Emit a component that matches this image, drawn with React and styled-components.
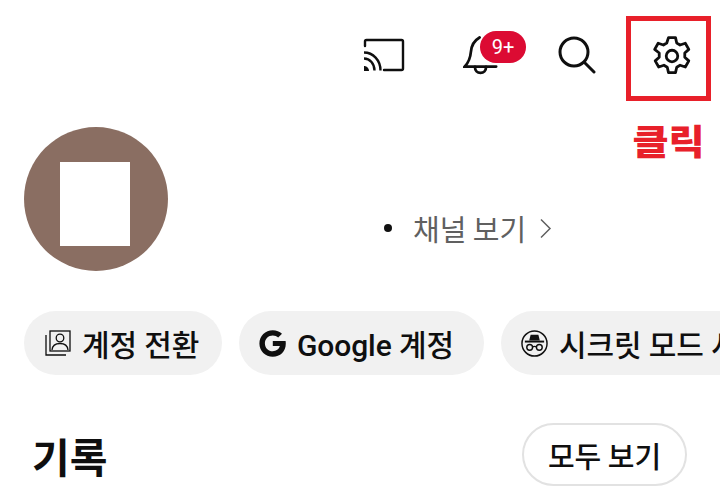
import React from "react";
import styled, { createGlobalStyle } from "styled-components";

const Global = createGlobalStyle`
  html, body { margin: 0; padding: 0; background: #fff; }
  body { font-family: "Roboto", "Noto Sans CJK KR", sans-serif; color: #0f0f0f; }
`;

const Page = styled.div`
  width: 720px;
  height: 491px;
  overflow: hidden;
  display: flex;
  flex-direction: column;
  background: #fff;
`;

const TopBar = styled.header`
  height: 101px;
  flex: none;
  display: flex;
  justify-content: flex-end;
  align-items: flex-start;
  padding: 16px 9px 0 0;
  box-sizing: border-box;
`;

const ToolIcon = styled.div`
  position: relative;
  width: ${(p) => p.$w}px;
  height: 78px;
  display: flex;
  align-items: center;
  justify-content: center;
  flex: none;
`;

const Highlight = styled.div`
  width: 85px;
  height: 85px;
  box-sizing: border-box;
  border: 5px solid #e8202a;
  padding: 0 0 6px 7px;
  display: flex;
  align-items: center;
  justify-content: center;
  flex: none;
`;

const Badge = styled.span`
  position: absolute;
  left: 47px;
  top: 15px;
  width: 46px;
  height: 32px;
  border-radius: 16px;
  background: #dc0b33;
  color: #fff;
  font-size: 20px;
  line-height: 32px;
  text-align: center;
`;

const Main = styled.div`
  display: flex;
  height: 210px;
  flex: none;
  align-items: flex-start;
  padding-left: 24px;
  box-sizing: border-box;
`;

const Avatar = styled.div`
  width: 144px;
  height: 144px;
  margin-top: 26px;
  border-radius: 50%;
  background: #8a6e62;
  display: flex;
  align-items: center;
  justify-content: center;
  flex: none;
`;

const Blank = styled.div`
  width: 70px;
  height: 84px;
  margin: 10px 2px 0 0;
  background: #fff;
`;

const Side = styled.div`
  flex: 1;
  display: flex;
  flex-direction: column;
  align-items: flex-end;
`;

const ClickLabel = styled.div`
  margin: 17px 9px 0 0;
  width: 85px;
  text-align: center;
  font-family: "Noto Sans CJK KR", sans-serif;
  font-weight: 900;
  font-size: 35px;
  line-height: 44px;
  color: #e8202a;
  transform: scaleX(1.12);
`;

const ChannelRow = styled.div`
  align-self: flex-start;
  margin: 48px 0 0 216px;
  display: flex;
  align-items: center;
  font-family: "Noto Sans CJK KR", sans-serif;
  font-size: 29px;
  line-height: 36px;
  color: #606060;
  white-space: nowrap;
`;

const Dot = styled.span`
  width: 8px;
  height: 8px;
  border-radius: 50%;
  background: #111;
  margin-right: 21px;
`;

const Chevron = styled.svg`
  margin-left: 13px;
`;

const Chips = styled.div`
  display: flex;
  gap: 17px;
  padding-left: 24px;
  height: 64px;
  flex: none;
  white-space: nowrap;
`;

const Chip = styled.div`
  width: ${(p) => p.$w}px;
  height: 64px;
  box-sizing: border-box;
  padding-left: ${(p) => p.$pl ?? 20}px;
  display: flex;
  align-items: center;
  gap: 11px;
  border-radius: 32px;
  background: #f1f1f1;
  font-family: "Roboto", "Noto Sans CJK KR", sans-serif;
  font-weight: 500;
  font-size: 30px;
  letter-spacing: -0.1px;
  color: #0f0f0f;
  flex: none;
`;

const History = styled.div`
  display: flex;
  align-items: flex-start;
  justify-content: space-between;
  padding: 0 33px 0 32px;
  margin-top: 48px;
`;

const Title = styled.h2`
  margin: 1px 0 0;
  font-family: "Noto Sans CJK KR", sans-serif;
  font-weight: 700;
  font-size: 41px;
  line-height: 63px;
  color: #0f0f0f;
`;

const Outline = styled.div`
  width: 165px;
  height: 63px;
  box-sizing: border-box;
  border: 2px solid #e2e2e2;
  border-radius: 32px;
  display: flex;
  align-items: center;
  justify-content: center;
  font-family: "Noto Sans CJK KR", sans-serif;
  font-weight: 500;
  font-size: 29px;
  color: #0f0f0f;
`;

const CastIcon = () => (
  <svg width="42" height="34" viewBox="0 0 42 34" fill="none" stroke="#0f0f0f" strokeWidth="2.400">
    <path d="M2 8V3.500A1.500 1.500 0 0 1 3.500 2h35A1.500 1.500 0 0 1 40 3.500v27a1.500 1.500 0 0 1-1.500 1.500H21" strokeLinecap="round" />
    <path d="M1 14.500C10 14.500 17.500 22 17.500 32.500" />
    <path d="M1 20.500C7 20.500 11.500 26 11.500 32.500" />
    <path d="M1 28v5h5c0-2.800-2.200-5-5-5z" fill="#0f0f0f" stroke="none" />
  </svg>
);

const BellIcon = () => (
  <svg width="35" height="40" viewBox="0 0 38 42" fill="none" stroke="#0f0f0f" strokeWidth="3" strokeLinecap="round">
    <path d="M18 2C11 6 9 11 8.500 18C8 24 6 29 2 33.500H36" />
    <path d="M13 34c0 4 2.500 6.500 6 6.500s6-2.500 6-6.500" />
  </svg>
);

const SearchIcon = () => (
  <svg width="38" height="38" viewBox="0 0 38 38" fill="none" stroke="#0f0f0f" strokeWidth="3" strokeLinecap="round">
    <circle cx="16" cy="16" r="14" />
    <path d="M27 27l9 9" />
  </svg>
);

const GearIcon = () => (
  <svg width="42" height="42" viewBox="0 0 24 24" fill="none" stroke="#0f0f0f" strokeWidth="1.600" strokeLinejoin="round">
    <path d="M10 1.500h4l.7 3.100 1.900 1.100 3-1 2 3.500-2.300 2.100v2.400l2.300 2.100-2 3.500-3-1-1.900 1.100-.7 3.100h-4l-.7-3.100-1.900-1.100-3 1-2-3.500 2.300-2.100v-2.400L2.100 8.200l2-3.500 3 1 1.900-1.100z" />
    <circle cx="12" cy="12" r="3.300" />
  </svg>
);

const SwitchIcon = () => (
  <svg width="26" height="26" viewBox="0 0 26 26" fill="none" stroke="#0f0f0f" strokeWidth="1.300">
    <rect x="5" y="1" width="20" height="20" />
    <path d="M1 5v20h20" />
    <circle cx="15" cy="8" r="3.800" />
    <path d="M7 20c.5-5 4-6.500 8-6.500s7.500 1.500 8 6.500" />
  </svg>
);

const GoogleIcon = () => (
  <svg width="27" height="27" viewBox="0 0 27 27">
    <path
      d="M26.600 11H13.800v5.100h7.100c-.9 3.300-3.700 5.200-7.100 5.200-4.500 0-7.900-3.500-7.900-7.900s3.400-7.900 7.900-7.900c2.100 0 4 .8 5.400 2.100l3.800-3.800C20.600 1.500 17.400.2 13.800.2 6.300.2.400 6.100.400 13.500s5.900 13.300 13.400 13.300c7.300 0 13-5.100 13-13.300 0-.9-.1-1.700-.2-2.500z"
      fill="#0f0f0f"
    />
  </svg>
);

const IncognitoIcon = () => (
  <svg width="27" height="27" viewBox="0 0 28 28" fill="none" stroke="#0f0f0f" strokeWidth="1.500">
    <circle cx="14" cy="14" r="13" />
    <path d="M8.500 11l1.500-6h8l1.500 6z" fill="#0f0f0f" stroke="none" />
    <path d="M4 12h20" strokeWidth="2" />
    <circle cx="9" cy="18" r="3" />
    <circle cx="19" cy="18" r="3" />
    <path d="M12 17.500c1.300-.7 2.700-.7 4 0" />
  </svg>
);

export default function App() {
  return (
    <Page>
      <Global />
      <TopBar>
        <ToolIcon $w={98}><CastIcon /></ToolIcon>
        <ToolIcon $w={94}>
          <BellIcon />
          <Badge>9+</Badge>
        </ToolIcon>
        <ToolIcon $w={99}><SearchIcon /></ToolIcon>
        <Highlight><GearIcon /></Highlight>
      </TopBar>
      <Main>
        <Avatar><Blank /></Avatar>
        <Side>
          <ClickLabel>클릭</ClickLabel>
          <ChannelRow>
            <Dot />
            채널 보기
            <Chevron width="13" height="21" viewBox="0 0 13 21" fill="none" stroke="#606060" strokeWidth="1.500">
              <path d="M2 1.500l9 9-9 9" />
            </Chevron>
          </ChannelRow>
        </Side>
      </Main>
      <Chips>
        <Chip $w={198} $pl={21}><SwitchIcon />계정 전환</Chip>
        <Chip $w={245}><GoogleIcon />Google 계정</Chip>
        <Chip $w={280}><IncognitoIcon />시크릿 모드 사용</Chip>
      </Chips>
      <History>
        <Title>기록</Title>
        <Outline>모두 보기</Outline>
      </History>
    </Page>
  );
}
